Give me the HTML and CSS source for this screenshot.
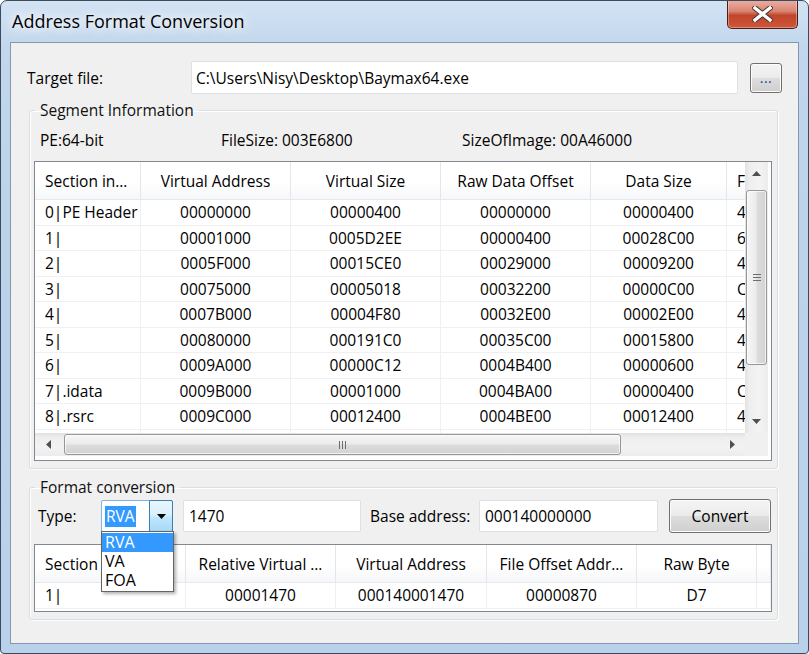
FILE: index.html
```html
<!DOCTYPE html>
<html>
<head>
<meta charset="utf-8">
<link rel="stylesheet" href="styles.css">
</head>
<body>
<div class="window">
  <div class="titlebar">
    <div class="title">Address Format Conversion</div>
    <div class="close">
      <svg width="21" height="16" viewBox="0 0 21 16">
        <path d="M3 2 L18 14 M18 2 L3 14" stroke="#4a3330" stroke-width="5.4" stroke-linecap="square"/>
        <path d="M3 2 L18 14 M18 2 L3 14" stroke="#ffffff" stroke-width="3.4" stroke-linecap="square"/>
      </svg>
    </div>
  </div>
  <div class="client">
    <div class="target-row">
      <span class="lbl-target">Target file:</span>
      <div class="textbox tb-path">C:\Users\Nisy\Desktop\Baymax64.exe</div>
      <div class="btn btn-dots">...</div>
    </div>

    <fieldset class="group seg">
      <legend>Segment Information</legend>
      <div class="info">
        <span>PE:64-bit</span>
        <span>FileSize: 003E6800</span>
        <span>SizeOfImage: 00A46000</span>
      </div>
      <div class="lv lv-big">
        <div class="lv-main">
          <div class="lv-head cols-big">
            <div class="hc left">Section in…</div>
            <div class="hc">Virtual Address</div>
            <div class="hc">Virtual Size</div>
            <div class="hc">Raw Data Offset</div>
            <div class="hc">Data Size</div>
            <div class="hc left">F</div>
          </div>
          <div class="lv-row cols-big"><div class="c left">0|PE Header</div><div class="c">00000000</div><div class="c">00000400</div><div class="c">00000000</div><div class="c">00000400</div><div class="c left">4</div></div>
          <div class="lv-row cols-big"><div class="c left">1|</div><div class="c">00001000</div><div class="c">0005D2EE</div><div class="c">00000400</div><div class="c">00028C00</div><div class="c left">6</div></div>
          <div class="lv-row cols-big"><div class="c left">2|</div><div class="c">0005F000</div><div class="c">00015CE0</div><div class="c">00029000</div><div class="c">00009200</div><div class="c left">4</div></div>
          <div class="lv-row cols-big"><div class="c left">3|</div><div class="c">00075000</div><div class="c">00005018</div><div class="c">00032200</div><div class="c">00000C00</div><div class="c left">C</div></div>
          <div class="lv-row cols-big"><div class="c left">4|</div><div class="c">0007B000</div><div class="c">00004F80</div><div class="c">00032E00</div><div class="c">00002E00</div><div class="c left">4</div></div>
          <div class="lv-row cols-big"><div class="c left">5|</div><div class="c">00080000</div><div class="c">000191C0</div><div class="c">00035C00</div><div class="c">00015800</div><div class="c left">4</div></div>
          <div class="lv-row cols-big"><div class="c left">6|</div><div class="c">0009A000</div><div class="c">00000C12</div><div class="c">0004B400</div><div class="c">00000600</div><div class="c left">4</div></div>
          <div class="lv-row cols-big"><div class="c left">7|.idata</div><div class="c">0009B000</div><div class="c">00001000</div><div class="c">0004BA00</div><div class="c">00000400</div><div class="c left">C</div></div>
          <div class="lv-row cols-big"><div class="c left">8|.rsrc</div><div class="c">0009C000</div><div class="c">00012400</div><div class="c">0004BE00</div><div class="c">00012400</div><div class="c left">4</div></div>
          <div class="lv-row cols-big"><div class="c left"></div><div class="c"></div><div class="c"></div><div class="c"></div><div class="c"></div><div class="c left"></div></div>
        </div>
        <div class="vscroll">
          <div class="arrow"><svg width="9" height="5" viewBox="0 0 9 5"><path d="M0 5 L4.5 0 L9 5 Z" fill="#505050"/></svg></div>
          <div class="vthumb"><span class="vgrip"></span></div>
          <div class="spacer"></div>
          <div class="arrow"><svg width="9" height="5" viewBox="0 0 9 5"><path d="M0 0 L4.5 5 L9 0 Z" fill="#505050"/></svg></div>
        </div>
        <div class="hscroll">
          <div class="harrow"><svg width="5" height="9" viewBox="0 0 5 9"><path d="M5 0 L0 4.5 L5 9 Z" fill="#505050"/></svg></div>
          <div class="hthumb"><span class="hgrip"></span></div>
          <div class="spacer"></div>
          <div class="harrow"><svg width="5" height="9" viewBox="0 0 5 9"><path d="M0 0 L5 4.5 L0 9 Z" fill="#505050"/></svg></div>
        </div>
        <div class="corner"></div>
      </div>
    </fieldset>

    <fieldset class="group conv">
      <legend>Format conversion</legend>
      <div class="conv-row">
        <span class="lbl-type">Type:</span>
        <div class="combo">
          <div class="combo-text"><span class="sel">RVA</span></div>
          <div class="combo-btn"><svg width="9" height="5" viewBox="0 0 9 5"><path d="M0 0 L4.5 5 L9 0 Z" fill="#000"/></svg></div>
          <div class="droplist">
            <div class="item active">RVA</div>
            <div class="item">VA</div>
            <div class="item">FOA</div>
          </div>
        </div>
        <div class="textbox tb-val">1470</div>
        <span class="lbl-base">Base address:</span>
        <div class="textbox tb-base">000140000000</div>
        <div class="btn btn-convert">Convert</div>
      </div>
      <div class="lv lv-small">
        <div class="lv-head cols-small">
          <div class="hc left">Section</div>
          <div class="hc">Relative Virtual …</div>
          <div class="hc">Virtual Address</div>
          <div class="hc">File Offset Addr…</div>
          <div class="hc">Raw Byte</div>
          <div class="hc"></div>
        </div>
        <div class="lv-row cols-small"><div class="c left">1|</div><div class="c">00001470</div><div class="c">000140001470</div><div class="c">00000870</div><div class="c">D7</div><div class="c"></div></div>
      </div>
    </fieldset>
  </div>
</div>
</body>
</html>
```
FILE: styles.css
```css
* { box-sizing: border-box; }
body {
  margin: 0;
  font-family: "Open Sans", "Liberation Sans", sans-serif;
  font-size: 15.5px;
  color: #000;
  background: #fff;
}
.window {
  width: 809px;
  height: 654px;
  border: 1px solid #3b4b5e;
  border-radius: 7px 7px 4px 4px;
  background: linear-gradient(180deg, #d3e3f4 0, #c2d7ed 45px, #bcd3ea 200px, #b9d1ea 100%);
  display: flex;
  flex-direction: column;
  overflow: hidden;
}
.titlebar {
  height: 41px;
  flex: none;
  display: flex;
  justify-content: space-between;
  align-items: flex-start;
  padding: 0 10px 0 11px;
}
.title {
  margin-top: 7px;
  font-size: 18px;
  line-height: 26px;
  color: #000;
  text-shadow: 0 0 8px #fff, 0 0 14px #fff, 0 0 20px rgba(255,255,255,.8);
}
.close {
  width: 71px;
  height: 29px;
  margin-top: -1px;
  border: 1px solid #4a1e18;
  border-top: none;
  border-radius: 0 0 5px 5px;
  background: linear-gradient(180deg, #eab0a4 0, #d98573 40%, #c0452d 55%, #cf5638 100%);
  box-shadow: inset 0 0 0 1px rgba(255,255,255,.35);
  display: flex;
  align-items: center;
  justify-content: center;
}
.client {
  flex: 1;
  margin: 0 9px 9px;
  border: 1px solid #8597ad;
  background: #f0f0f0;
  padding-top: 18px;
}
.target-row {
  display: flex;
  align-items: center;
  height: 33px;
  padding-left: 16px;
}
.lbl-target { width: 164px; }
.textbox {
  background: #fff;
  border: 1px solid #dde0e4;
  border-radius: 2px;
  padding-left: 4px;
  display: flex;
  align-items: center;
  white-space: nowrap;
}
.tb-path { width: 547px; height: 33px; }
.btn {
  border: 1px solid #707070;
  border-radius: 3px;
  background: linear-gradient(180deg, #f4f4f4 0, #ebebeb 50%, #dddddd 51%, #cfcfcf 100%);
  box-shadow: inset 0 0 0 1px #fcfcfc;
  display: flex;
  align-items: center;
  justify-content: center;
}
.btn-dots {
  width: 32px;
  height: 30px;
  margin-left: 12px;
  color: #1d3f8a;
  font-size: 14px;
  line-height: 14px;
  align-items: flex-end;
  padding-bottom: 7px;
  letter-spacing: 0.5px;
}
.group {
  margin: 0 20px 0 18px;
  border: 1px solid #d5dfe5;
  border-radius: 3px;
  box-shadow: inset 1px 1px 0 #fff, 1px 1px 0 #fff;
  min-width: 0;
}
.group legend {
  margin-left: 1px;
  padding: 0 5px;
  line-height: 20px;
  color: #111;
}
.seg {
  margin-top: 6px;
  padding: 0 3px 7px 4px;
}
.info {
  display: grid;
  grid-template-columns: 181px 241px 1fr;
  padding-left: 6px;
  margin-top: 10px;
  margin-bottom: 11px;
  line-height: 20px;
}
.lv {
  width: 738px;
  border: 1px solid #828790;
  background: #fff;
}
.lv-big {
  height: 300px;
  display: grid;
  grid-template-columns: 710px 23px;
  grid-template-rows: 271px 23px;
  padding: 0 3px 4px 0;
}
.lv-main { overflow: hidden; }
.lv-head {
  display: grid;
  height: 38px;
  width: max-content;
  background: linear-gradient(180deg, #ffffff 0, #ffffff 55%, #f6f7f9 100%);
  border-bottom: 1px solid #e6e8eb;
}
.cols-big { grid-template-columns: 106px 150px 150px 150px 136px 150px; }
.cols-small { grid-template-columns: 151px 150px 151px 150px 120px 14px; }
.hc {
  display: flex;
  align-items: center;
  justify-content: center;
  border-right: 1px solid #e4e7ea;
  white-space: nowrap;
  overflow: hidden;
}
.hc.left, .c.left { justify-content: flex-start; padding-left: 10px; }
.lv-row {
  display: grid;
  width: max-content;
  height: 25.5px;
  border-bottom: 1px solid #f0f0f0;
}
.c {
  display: flex;
  align-items: center;
  justify-content: center;
  border-right: 1px solid #f0f0f0;
  white-space: nowrap;
  overflow: hidden;
}
.vscroll {
  display: flex;
  flex-direction: column;
  background: linear-gradient(90deg, #e2e2e2 0, #eeeeee 20%, #f3f3f3 60%, #ececec 100%);
}
.arrow {
  height: 23px;
  flex: none;
  display: flex;
  align-items: center;
  justify-content: center;
}
.spacer { flex: 1; }
.vthumb {
  height: 175px;
  margin: 5px 1px 0 1px;
  border: 1px solid #979797;
  border-radius: 3px;
  background: linear-gradient(90deg, #f6f6f6 0, #ececec 45%, #dcdcdc 55%, #d2d2d2 100%);
  box-shadow: inset 0 0 0 1px rgba(255,255,255,.7);
  display: flex;
  align-items: center;
  justify-content: center;
}
.vgrip {
  width: 8px;
  height: 7px;
  border-top: 1px solid #6e6e6e;
  border-bottom: 1px solid #6e6e6e;
  background: linear-gradient(#6e6e6e, #6e6e6e) center / 100% 1px no-repeat;
}
.hscroll {
  display: flex;
  align-items: stretch;
  background: linear-gradient(180deg, #e2e2e2 0, #eeeeee 20%, #f3f3f3 60%, #ececec 100%);
}
.harrow {
  width: 26px;
  flex: none;
  display: flex;
  align-items: center;
  justify-content: center;
}
.hthumb {
  width: 557px;
  margin: 1px 0 1px 3px;
  border: 1px solid #979797;
  border-radius: 3px;
  background: linear-gradient(180deg, #f6f6f6 0, #ececec 45%, #dcdcdc 55%, #d2d2d2 100%);
  box-shadow: inset 0 0 0 1px rgba(255,255,255,.7);
  display: flex;
  align-items: center;
  justify-content: center;
}
.hgrip {
  width: 7px;
  height: 8px;
  border-left: 1px solid #6e6e6e;
  border-right: 1px solid #6e6e6e;
  background: linear-gradient(#6e6e6e, #6e6e6e) center / 1px 100% no-repeat;
}
.corner { background: #f0f0f0; }

.conv {
  margin-top: 8px;
  padding: 0 3px 7px 4px;
}
.conv-row {
  display: flex;
  align-items: center;
  height: 34px;
  margin-top: 2px;
  margin-bottom: 11px;
  padding-left: 4px;
}
.lbl-type { width: 63px; }
.combo {
  position: relative;
  width: 72px;
  height: 32px;
  display: flex;
  border: 1px solid #7eb4ea;
  border-radius: 2px;
  background: #fff;
}
.combo-text {
  flex: 1;
  display: flex;
  align-items: center;
  padding-left: 3px;
}
.sel {
  background: #3399ff;
  color: #fff;
  line-height: 21px;
  padding: 0 1px;
}
.combo-btn {
  width: 24px;
  margin: -1px -1px -1px 0;
  border: 1px solid #3c7fb1;
  border-radius: 0 2px 2px 0;
  background: linear-gradient(180deg, #eaf6fd 0, #d9f0fc 45%, #bee6fd 55%, #a7d9f5 100%);
  display: flex;
  align-items: center;
  justify-content: center;
}
.droplist {
  position: absolute;
  left: -1px;
  top: 30px;
  width: 73px;
  border: 1px solid #646464;
  background: #fff;
  box-shadow: 2px 2px 3px rgba(0,0,0,.3);
  padding: 1px 0;
  z-index: 5;
}
.item {
  height: 19px;
  line-height: 19px;
  padding-left: 3px;
  font-size: 16px;
}
.item.active { background: #3399ff; color: #fff; }
.tb-val { width: 178px; height: 32px; margin-left: 10px; padding-left: 5px; }
.lbl-base { margin-left: 9px; width: 109px; }
.tb-base { width: 179px; height: 32px; padding-left: 5px; }
.btn-convert { width: 102px; height: 34px; margin-left: 11px; }
.lv-small { height: 68px; }
```
